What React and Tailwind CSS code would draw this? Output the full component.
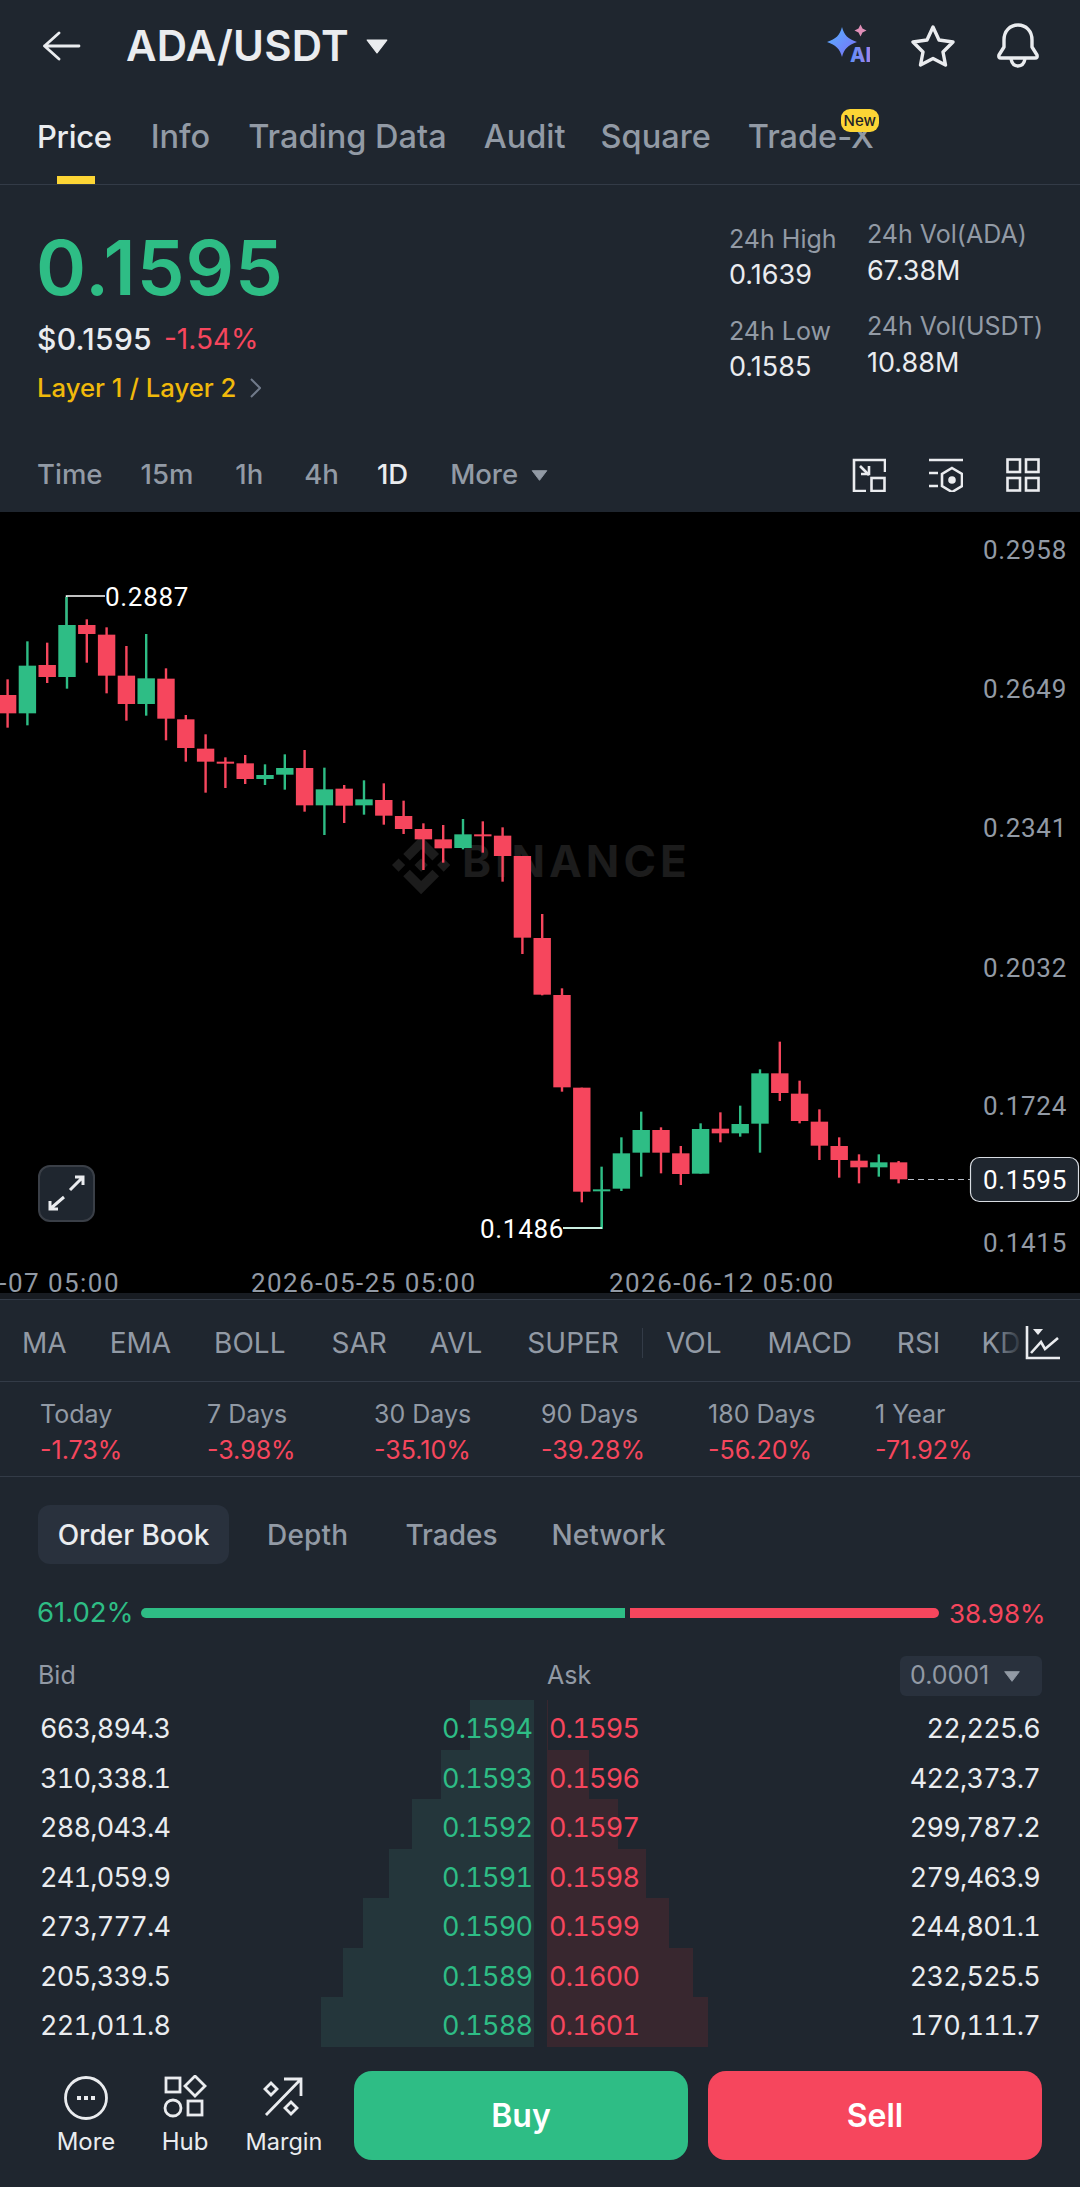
import React from 'react';

const G = '#2ebd85', R = '#f6465d';
const font = "Inter, 'Liberation Sans', sans-serif";
const z2 = [
  ['r',478,525,580,623],['g',364,437,580,616],['r',368,435,471,489],['g',315,315,471,506],['r',298,315,342,428],
  ['r',322,344,467,520],['r',378,467,552,602],['g',342,475,552,587],['r',445,476,596,661],['r',585,598,684,725],
  ['r',643,686,725,818],['r',712,725,731,804],['r',705,730,777,792],['g',733,765,777,795],['g',703,744,764,809],
  ['r',690,744,856,875],['g',743,808,856,945],['r',795,806,857,909],['g',781,838,856,884],['r',790,840,887,914],
  ['r',842,888,927,942],['r',910,927,958,1050],['r',915,958,985,1028],['g',897,943,984,988],['r',904,943,949,998],['r',922,947,1008,1085],
].map(([c,a,b,d,e]) => [c,520+a/3,520+b/3,520+d/3,520+e/3]);
const z3 = [
  ['r',108,108,353,402],['r',282,354,524,526],['r',505,525,802,815],['r',803,803,1115,1147],['g',1040,1108,1114,1225],
  ['g',952,1000,1106,1113],['g',875,930,998,1070],['r',922,930,998,1060],['r',978,1000,1062,1095],['g',910,927,1061,1061],
  ['r',877,926,940,967],['g',857,912,940,950],['g',748,760,911,998],['r',665,760,819,843],['r',782,821,903,910],
  ['r',868,905,977,1020],['r',952,978,1020,1073],['r',1003,1022,1042,1090],['g',1003,1027,1042,1070],['r',1023,1027,1078,1090],
].map(([c,a,b,d,e]) => [c,820+a/3,820+b/3,820+d/3,820+e/3]);
const candles = [...z2, ...z3];

const axis = [['0.2958',550],['0.2649',689],['0.2341',828],['0.2032',968],['0.1724',1106],['0.1415',1243]];
const rows = [
  ['663,894.3','0.1594','0.1595','22,225.6',64,1],
  ['310,338.1','0.1593','0.1596','422,373.7',93,42],
  ['288,043.4','0.1592','0.1597','299,787.2',122,71],
  ['241,059.9','0.1591','0.1598','279,463.9',145,99],
  ['273,777.4','0.1590','0.1599','244,801.1',171,122],
  ['205,339.5','0.1589','0.1600','232,525.5',191,146],
  ['221,011.8','0.1588','0.1601','170,111.7',213,161],
];
const stats = [['Today','-1.73%'],['7 Days','-3.98%'],['30 Days','-35.10%'],['90 Days','-39.28%'],['180 Days','-56.20%'],['1 Year','-71.92%']];

function Chart() {
  const T = 512;
  return (
    <div className="relative h-[781px] w-full bg-black overflow-hidden">
      <svg width="1080" height="781" viewBox={`0 ${T} 1080 781`} className="block" style={{ fontFamily: "Roboto, sans-serif" }}>
        <g fill="#1c1c1c">
          <g transform="translate(392 836) scale(0.46)">
            <path d="M38.73 53.2l24.59-24.58 24.6 24.6 14.3-14.31L63.32 0l-38.9 38.9zM0 63.31l14.3-14.31 14.31 14.31-14.31 14.3zM38.73 73.41l24.59 24.59 24.6-24.6 14.31 14.29-38.9 38.91-38.91-38.88-.02-.02zM98 63.31l14.3-14.31 14.31 14.3-14.31 14.32zM77.83 63.3L63.32 48.78 52.59 59.51l-1.24 1.23-2.54 2.54 14.51 14.5 14.5-14.47z" />
          </g>
          <text x="462" y="877" fontSize="44" fontWeight="700" letterSpacing="4" fontFamily="Inter, sans-serif">BINANCE</text>
        </g>
        {candles.map(([c, wt, bt, bb, wb], i) => {
          const x = 7.6 + 19.8 * i;
          const col = c === 'g' ? G : R;
          return (
            <g key={i} fill={col}>
              <rect x={x - 1.2} y={wt} width="2.4" height={wb - wt} />
              <rect x={x - 8.7} y={bt} width="17.4" height={Math.max(bb - bt, 2)} />
            </g>
          );
        })}
        <path d="M66.5 625V596H105" fill="none" stroke="#fff" strokeWidth="1.5" />
        <path d="M66.5 625V597" stroke={G} strokeWidth="2.4" />
        <path d="M602 1180V1228H563" fill="none" stroke={G} strokeWidth="2" />
        <path d="M602 1228H563" stroke="#fff" strokeWidth="1.5" />
        <text x="105" y="606" fontSize="26" fill="#fff" letterSpacing="0.7">0.2887</text>
        <text x="480" y="1238" fontSize="26" fill="#fff" letterSpacing="0.7">0.1486</text>
        <path d="M908 1179.5H970" stroke="#b7bdc6" strokeWidth="1.2" strokeDasharray="6 4" />
        {axis.map(([t, y]) => (
          <text key={t} x="1067" y={y + 9} fontSize="26" textAnchor="end" fill="#929aa5" letterSpacing="0.7">{t}</text>
        ))}
        <rect x="970.5" y="1157.5" width="108" height="44" rx="9" fill="#1f262f" stroke="#d8dce2" strokeWidth="1.2" />
        <text x="1067" y="1189" fontSize="26" textAnchor="end" fill="#fff" letterSpacing="0.7">0.1595</text>
        <text x="120" y="1292" fontSize="26" textAnchor="end" fill="#929aa5" letterSpacing="1.45">2026-05-07 05:00</text>
        <text x="251" y="1292" fontSize="26" fill="#929aa5" letterSpacing="1.45">2026-05-25 05:00</text>
        <text x="609" y="1292" fontSize="26" fill="#929aa5" letterSpacing="1.45">2026-06-12 05:00</text>
      </svg>
      <div className="absolute left-[38px] top-[653px] w-[57px] h-[57px] rounded-[12px] bg-[#1f262f] border-2 border-[#3a3f47] flex items-center justify-center">
        <svg width="53" height="53" viewBox="2 2 53 53" fill="none" stroke="#eaecef" strokeWidth="3" className="shrink-0">
          <path d="M37 12H45V20M45 12L32 25M12 36V44H20M12 44L26 32" />
        </svg>
      </div>
    </div>
  );
}

const Tri = ({ w = 18, h = 12, c = '#eaecef' }) => (
  <svg width={w} height={h} viewBox="0 0 18 12"><path d="M1 .7H17L9 11.300Z" fill={c} stroke={c} strokeWidth="1" strokeLinejoin="round" /></svg>
);

export default function App() {
  return (
    <div className="w-[1080px] h-[2187px] bg-[#1f262f] text-[#eaecef] overflow-hidden" style={{ fontFamily: font }}>
      {/* header */}
      <div className="h-[92px] flex items-center pl-[43px] pr-[40px]">
        <svg width="38" height="30" viewBox="0 0 38 30" fill="none" stroke="#eaecef" strokeWidth="2.8" strokeLinecap="round" strokeLinejoin="round"><path d="M36 15H1.500M16 2L1.500 15L16 28" /></svg>
        <span className="ml-[45px] text-[42px] font-semibold leading-none tracking-[0.2px]">ADA/USDT</span>
        <span className="ml-[17px] flex"><Tri w={22} h={15} /></span>
        <div className="ml-auto flex items-center gap-[41px]">
          <svg width="44" height="44" viewBox="0 0 44 44">
            <defs>
              <linearGradient id="ai" x1="0" y1="0" x2="1" y2="1"><stop offset="0" stopColor="#55b4ff" /><stop offset="1" stopColor="#7c6cf6" /></linearGradient>
              <linearGradient id="ai2" x1="0" y1="0" x2="1" y2="0"><stop offset="0" stopColor="#5f8ff7" /><stop offset="1" stopColor="#a184ee" /></linearGradient>
            </defs>
            <path d="M16 3C18 11 22 15 31 18C22 21 18 25 16 33C14 25 10 21 1 18C10 15 14 11 16 3Z" fill="url(#ai)" />
            <path d="M34.500 0.500L36.500 4.500L40.500 6.500L36.500 8.500L34.500 12.500L32.500 8.500L28.500 6.500L32.500 4.500Z" fill="#e08fb8" />
            <text x="24" y="38" fontSize="20" fontWeight="800" fill="url(#ai2)">AI</text>
          </svg>
          <svg width="44" height="44" viewBox="0 0 44 44" fill="none" stroke="#eaecef" strokeWidth="3.4" strokeLinejoin="round"><path d="M22 3L28 16L42 18L32 28L34.500 41L22 34.500L9.500 41L12 28L2 18L16 16Z" /></svg>
          <svg width="44" height="46" viewBox="0 0 44 46" fill="none" stroke="#eaecef" strokeWidth="3.4" strokeLinejoin="round"><path d="M8 24V17C8 8 14 2 22 2C30 2 36 8 36 17V24L41 32C41.500 34 41 35 39 35H5C3 35 2.500 34 3 32Z" /><path d="M15 36C16 41 19 43 22 43C25 43 28 41 29 36" /></svg>
        </div>
      </div>
      {/* tabs */}
      <div className="relative h-[93px] border-b border-[#333b47] flex gap-[38px] pl-[37px] text-[32.5px] font-medium text-[#929aa5]">
        <div className="relative text-[#eaecef] text-[31px] tracking-[-0.3px] pt-[27px] leading-[36px]">Price<div className="absolute left-[20px] bottom-0 w-[38px] h-[8px] bg-[#fcd535]" /></div>
        <div className="pt-[27px] leading-[36px] ml-[1px]">Info</div>
        <div className="pt-[27px] leading-[36px]">Trading Data</div>
        <div className="pt-[27px] leading-[36px] -ml-[1px]">Audit</div>
        <div className="pt-[27px] leading-[36px] -ml-[3px]">Square</div>
        <div className="relative pt-[27px] leading-[36px] -ml-[1px]">Trade-X
          <span className="absolute left-[93px] top-[17px] w-[38px] h-[23px] rounded-[9px] bg-[#fcd535] text-[#1e2329] text-[15px] leading-[23px] text-center font-medium">New</span>
        </div>
      </div>
      {/* price */}
      <div className="h-[215px] flex pl-[37px]">
        <div className="w-[692px] pt-[37px]">
          <div className="text-[76px] font-semibold leading-[90px] tracking-[1px] text-[#2ebd85] -ml-[1px]">0.1595</div>
          <div className="flex items-center gap-[12px] mt-[9px] h-[36px]">
            <span className="text-[30px] font-medium tracking-[0.3px]">$0.1595</span>
            <span className="text-[28px] text-[#f6465d]">-1.54%</span>
          </div>
          <div className="flex items-center gap-[14px] mt-[13px] text-[25.700px] font-medium text-[#f0b90b] leading-[36px]">
            Layer 1 / Layer 2
            <svg width="11" height="20" viewBox="0 0 11 20" fill="none" stroke="#707a8a" strokeWidth="2"><path d="M1 1L10 10L1 19" /></svg>
          </div>
        </div>
        <div className="w-[138px] pt-[36px] leading-[36px]">
          <div className="text-[#929aa5] text-[25px]">24h High</div><div className="text-[27px]">0.1639</div>
          <div className="text-[#929aa5] text-[25px] mt-[20px]">24h Low</div><div className="text-[27px]">0.1585</div>
        </div>
        <div className="pt-[31px] leading-[36px]">
          <div className="text-[#929aa5] text-[25px]">24h Vol(ADA)</div><div className="text-[27px] mt-[1px]">67.38M</div>
          <div className="text-[#929aa5] text-[25px] mt-[19px]">24h Vol(USDT)</div><div className="text-[27px] mt-[1px]">10.88M</div>
        </div>
      </div>
      {/* timeframe */}
      <div className="h-[112px] flex items-center pl-[37px] pr-[40px] text-[27.500px] font-medium text-[#929aa5] pt-[38px]">
        <div className="flex items-center">
          <span>Time</span>
          <span className="ml-[38px]">15m</span>
          <span className="ml-[42px]">1h</span>
          <span className="ml-[41px]">4h</span>
          <span className="ml-[38px] text-[#eaecef]">1D</span>
          <span className="ml-[42px] flex items-center gap-[13px]">More <Tri w={17} h={11} c="#929aa5" /></span>
        </div>
        <div className="ml-auto flex items-center gap-[43px]">
          <svg width="34" height="34" viewBox="0 0 34 34" fill="none" stroke="#eaecef" strokeWidth="2.6"><path d="M14 33H2V2H33V14" /><rect x="19.500" y="20" width="13" height="13" /><path d="M8 8L17 17" /><path d="M9 16H17V8" /></svg>
          <svg width="34" height="34" viewBox="0 0 34 34" fill="none" stroke="#eaecef" strokeWidth="2.6"><path d="M0 2H34M0 15H9M0 28H9" /><path d="M23 10L33 16V28L23 34L13 28V16Z" /><circle cx="23" cy="22" r="2.500" fill="#eaecef" /></svg>
          <svg width="34" height="34" viewBox="0 0 34 34" fill="none" stroke="#eaecef" strokeWidth="2.6"><rect x="1.500" y="1.500" width="12.500" height="12.500" /><rect x="20" y="1.500" width="12.500" height="12.500" /><rect x="1.500" y="20" width="12.500" height="12.500" /><rect x="20" y="20" width="12.500" height="12.500" /></svg>
        </div>
      </div>
      <Chart />
      <div className="h-[6px] bg-[#181c22]" />
      {/* indicators */}
      <div className="relative h-[83px] border-t border-b border-[#333b47] flex items-center pl-[22px] pt-[4px] text-[28px] text-[#929aa5] whitespace-nowrap overflow-hidden">
        <span>MA</span>
        <span className="ml-[43px]">EMA</span>
        <span className="ml-[43px]">BOLL</span>
        <span className="ml-[46px]">SAR</span>
        <span className="ml-[43px]">AVL</span>
        <span className="ml-[45px]">SUPER</span>
        <div className="w-px h-[30px] bg-[#333b47] ml-[23px] mr-[23px]" />
        <span>VOL</span>
        <span className="ml-[46px]">MACD</span>
        <span className="ml-[45px]">RSI</span>
        <span className="ml-[41px]">KD</span>
        <div className="absolute right-[56px] top-0 bottom-0 w-[30px] bg-linear-to-r from-transparent to-[#1f262f]" />
        <div className="absolute right-0 top-0 bottom-0 w-[56px] bg-[#1f262f] flex items-center pl-[1px] pt-[4px]">
          <svg width="36" height="36" viewBox="0 0 36 36" fill="none" stroke="#eaecef" strokeWidth="2.6"><path d="M2 1V33H35" /><path d="M6 28L16 17L20 24L33 13" /><path d="M8 4H18L13 10Z" fill="#eaecef" stroke="none" /></svg>
        </div>
      </div>
      {/* stats */}
      <div className="h-[95px] border-b border-[#333b47] grid grid-cols-6 pl-[40px] pr-[38px] pt-[14px] text-[25px] leading-[36px]">
        {stats.map(([a, b]) => (
          <div key={a}><div className="text-[#929aa5]">{a}</div><div className="text-[#f6465d]">{b}</div></div>
        ))}
      </div>
      {/* order tabs */}
      <div className="flex items-center h-[59px] mt-[28px] ml-[38px] text-[28px] font-medium text-[#929aa5]">
        <div className="h-full w-[191px] justify-center rounded-[12px] bg-[#29313d] text-[#eaecef] flex items-center">Order Book</div>
        <span className="ml-[38px] tracking-[0.2px]">Depth</span>
        <span className="ml-[57px]">Trades</span>
        <span className="ml-[54px]">Network</span>
      </div>
      {/* ratio */}
      <div className="flex items-center h-[40px] mt-[29px] pl-[37px] text-[27.500px]">
        <span className="text-[#2ebd85] w-[104px]">61.02%</span>
        <div className="w-[798px] flex gap-[5px] h-[10px]">
          <div className="w-[484px] bg-[#2ebd85] rounded-l-full" />
          <div className="flex-1 bg-[#f6465d] rounded-r-full" />
        </div>
        <span className="text-[#f6465d] ml-[10px] text-[26px]">38.98%</span>
      </div>
      {/* bid / ask header */}
      <div className="flex items-center h-[40px] mt-[23px] pl-[38px] pr-[38px] text-[25px] text-[#929aa5]">
        <span className="w-[509px]">Bid</span>
        <span>Ask</span>
        <div className="ml-auto h-full w-[142px] rounded-[6px] bg-[#29313d] flex items-center pl-[10px] gap-[14px]">0.0001 <Tri w={18} h={11} c="#929aa5" /></div>
      </div>
      {/* rows */}
      <div className="mt-[4px] text-[27px] tabular-nums tracking-[-0.75px]">
        {rows.map(([b, p1, p2, a, gw, rw]) => (
          <div key={p1} className="relative h-[49.500px] flex items-center pl-[40px] pr-[40px] pt-[9px]">
            <div className="absolute top-0 bottom-0 right-[546px] bg-[#24363b]" style={{ width: gw }} />
            <div className="absolute top-0 bottom-0 left-[547px] bg-[#38272f]" style={{ width: rw }} />
            <span className="relative w-[402px]">{b}</span>
            <span className="relative w-[107px] text-[#2ebd85]">{p1}</span>
            <span className="relative text-[#f6465d]">{p2}</span>
            <span className="relative ml-auto">{a}</span>
          </div>
        ))}
      </div>
      {/* bottom */}
      <div className="flex mt-[24px] h-[89px] pr-[38px]">
        <div className="w-[354px] flex text-[24px]">
          <div className="w-[126px] pl-[46px] flex flex-col items-center">
            <svg width="46" height="46" viewBox="0 0 46 46" fill="none" stroke="#eaecef" strokeWidth="2.800" className="mt-[4px]"><circle cx="23" cy="23" r="20.500" /><path d="M14 23H18M21 23H25M28 23H32" strokeWidth="4" /></svg>
            <span className="mt-[5px] leading-[32px]">More</span>
          </div>
          <div className="w-[118px] flex flex-col items-center">
            <svg width="44" height="46" viewBox="0 0 44 46" fill="none" stroke="#eaecef" strokeWidth="2.800" className="mt-[4px]"><rect x="3" y="3" width="14" height="14" /><path d="M32 1L42 11L32 21L22 11Z" /><circle cx="10" cy="33" r="8" /><rect x="25" y="26" width="14" height="14" /></svg>
            <span className="mt-[5px] leading-[32px]">Hub</span>
          </div>
          <div className="w-[80px] flex flex-col items-center">
            <svg width="44" height="46" viewBox="0 0 44 46" fill="none" stroke="#eaecef" strokeWidth="2.800" className="mt-[4px]"><path d="M4 40L39 4M22 4H39V21" /><path d="M9 8L15 14L9 20L3 14Z" /><path d="M29 27L35 33L29 39L23 33Z" /></svg>
            <span className="mt-[5px] leading-[32px] text-[23.500px]">Margin</span>
          </div>
        </div>
        <div className="w-[334px] rounded-[18px] bg-[#2ebd85] flex items-center justify-center text-[32px] font-semibold text-white pt-[2px]">Buy</div>
        <div className="w-[334px] ml-[20px] rounded-[18px] bg-[#f6465d] flex items-center justify-center text-[32px] font-semibold text-white pt-[2px]">Sell</div>
      </div>
    </div>
  );
}
